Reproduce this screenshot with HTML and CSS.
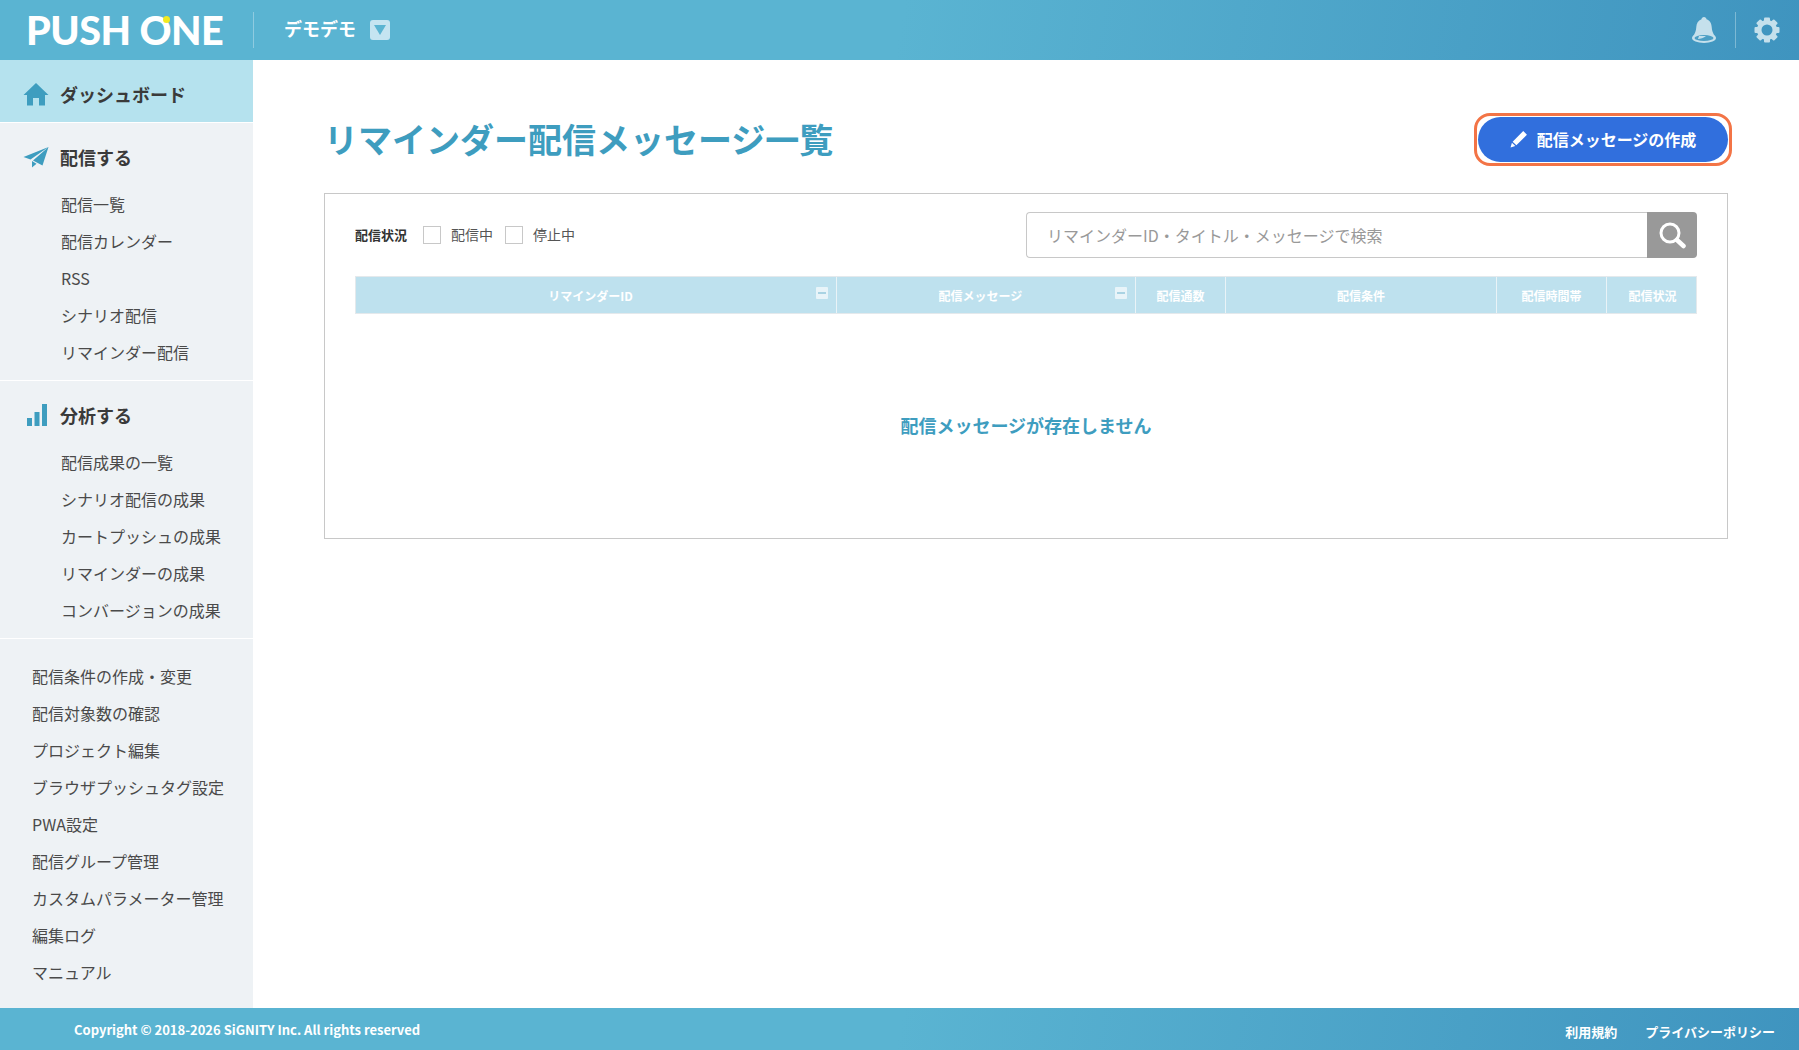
FILE: index.html
```html
<!DOCTYPE html>
<html lang="ja">
<head>
<meta charset="utf-8">
<title>リマインダー配信メッセージ一覧</title>
<link rel="stylesheet" href="styles.css">
</head>
<body>
<header class="topbar">
  <div class="brand"><span class="logo">PUSH O<span class="logo-dot"></span>NE</span></div>
  <div class="project">
    <span class="project-name">デモデモ</span>
    <span class="project-toggle"><svg width="12" height="10" viewBox="0 0 12 10"><path d="M0 0H12L6 10Z" fill="#5ab4d2"/></svg></span>
  </div>
  <div class="top-actions">
    <svg class="bell" width="24" height="26" viewBox="1 1 24 26"><path d="M13 1c1.500 0 2.300 1 2.500 2.200C19 4.300 20.500 7.300 20.700 11c.2 4 1.300 6.500 3.300 9.200H2C4 17.500 5.100 15 5.300 11 5.500 7.300 7 4.300 10.500 3.200 10.700 2 11.500 1 13 1Z" fill="#c5e0ec"/><ellipse cx="13" cy="22" rx="12" ry="5" fill="#c5e0ec"/><ellipse cx="13" cy="22" rx="9.500" ry="3" fill="#4c9fc5"/><path d="M7 23c2-.2 6-1 8-3H8Z" fill="#c5e0ec"/></svg>
    <span class="top-sep"></span>
    <svg class="gear" width="26" height="26" viewBox="0 0 26 26">
      <circle cx="13" cy="13" r="7.800" fill="none" stroke="#c5e0ec" stroke-width="4.600"/>
      <g fill="#c5e0ec">
        <rect x="10" y="0.500" width="6" height="5" rx="1"/>
        <rect x="10" y="0.500" width="6" height="5" rx="1" transform="rotate(45 13 13)"/>
        <rect x="10" y="0.500" width="6" height="5" rx="1" transform="rotate(90 13 13)"/>
        <rect x="10" y="0.500" width="6" height="5" rx="1" transform="rotate(135 13 13)"/>
        <rect x="10" y="0.500" width="6" height="5" rx="1" transform="rotate(180 13 13)"/>
        <rect x="10" y="0.500" width="6" height="5" rx="1" transform="rotate(225 13 13)"/>
        <rect x="10" y="0.500" width="6" height="5" rx="1" transform="rotate(270 13 13)"/>
        <rect x="10" y="0.500" width="6" height="5" rx="1" transform="rotate(315 13 13)"/>
      </g>
    </svg>
  </div>
</header>
<div class="body-row">
  <aside class="sidebar">
    <a class="nav-home">
      <svg class="nav-icon" width="26" height="24" viewBox="0 0 26 24"><path fill="#3e9dbf" d="M13 1 25.500 13h-3.500v10.500h-6V16h-6v7.500H4V13H.5Z"/></svg>
      <span>ダッシュボード</span>
    </a>
    <section class="nav-group">
      <div class="nav-head">
        <svg class="nav-icon" width="26" height="22" viewBox="0 0 26 22"><path fill="#3e9dbf" d="M25.500 1 .5 11l7 2.500Zm0 0L10 14.500 19.500 19.500ZM9 15v6.500l4.500-3.700Z"/></svg>
        <span>配信する</span>
      </div>
      <ul class="nav-list">
        <li>配信一覧</li><li>配信カレンダー</li><li>RSS</li><li>シナリオ配信</li><li>リマインダー配信</li>
      </ul>
    </section>
    <section class="nav-group">
      <div class="nav-head">
        <svg class="nav-icon" width="26" height="24" viewBox="0 0 26 24"><path fill="#3e9dbf" d="M4 15h5v8H4zM11.500 9h5v14h-5zM19 1h5v22h-5z"/></svg>
        <span>分析する</span>
      </div>
      <ul class="nav-list">
        <li>配信成果の一覧</li><li>シナリオ配信の成果</li><li>カートプッシュの成果</li><li>リマインダーの成果</li><li>コンバージョンの成果</li>
      </ul>
    </section>
    <ul class="nav-misc">
      <li>配信条件の作成・変更</li><li>配信対象数の確認</li><li>プロジェクト編集</li><li>ブラウザプッシュタグ設定</li><li>PWA設定</li><li>配信グループ管理</li><li>カスタムパラメーター管理</li><li>編集ログ</li><li>マニュアル</li>
    </ul>
  </aside>
  <main class="content">
    <div class="page-head">
      <h1 class="page-title">リマインダー配信メッセージ一覧</h1>
      <div class="create-outline">
        <a class="create-btn">
          <svg width="18" height="18" viewBox="0 0 17 17"><path fill="#fff" d="M12.500 1 16 4.500 6 14.500 2.500 11ZM1.800 12l3.200 3.200L.5 16.500Z"/></svg>
          配信メッセージの作成
        </a>
      </div>
    </div>
    <section class="panel">
      <div class="toolbar">
        <div class="filters">
          <span class="filter-title">配信状況</span>
          <label class="check"><span class="box"></span><span class="check-text">配信中</span></label>
          <label class="check"><span class="box"></span><span class="check-text">停止中</span></label>
        </div>
        <div class="search">
          <div class="search-input">リマインダーID・タイトル・メッセージで検索</div>
          <div class="search-btn"><svg width="28" height="28" viewBox="0 0 28 28"><circle cx="12" cy="12" r="9" fill="none" stroke="#fff" stroke-width="3"/><path d="M19 19l6.500 6" stroke="#fff" stroke-width="4.500" stroke-linecap="round"/></svg></div>
        </div>
      </div>
      <div class="thead">
        <div class="th th-collapsible"><span>リマインダーID</span><i class="collapse"></i></div>
        <div class="th th-collapsible"><span>配信メッセージ</span><i class="collapse"></i></div>
        <div class="th"><span>配信通数</span></div>
        <div class="th"><span>配信条件</span></div>
        <div class="th"><span>配信時間帯</span></div>
        <div class="th"><span>配信状況</span></div>
      </div>
      <p class="empty">配信メッセージが存在しません</p>
    </section>
  </main>
</div>
<footer class="footer">
  <span class="copyright">Copyright © 2018-2026 SiGNITY Inc. All rights reserved</span>
  <nav class="foot-links"><a>利用規約</a><a>プライバシーポリシー</a></nav>
</footer>
</body>
</html>
```
FILE: styles.css
```css
* { box-sizing: border-box; }
html, body { margin: 0; height: 100%; }
body {
  display: flex;
  flex-direction: column;
  height: 1050px;
  font-family: "Noto Sans CJK JP", "Noto Sans", sans-serif;
  color: #444;
  background: #fff;
  overflow: hidden;
}
ul { list-style: none; margin: 0; padding: 0; }

.topbar {
  flex: 0 0 60px;
  display: flex;
  align-items: center;
  background: linear-gradient(100deg, #5ab4d2 0%, #5ab4d2 50%, #3f94bf 100%);
}
.brand {
  width: 254px;
  height: 36px;
  border-right: 1px solid #8fcbe0;
  padding-left: 26px;
  display: flex;
  align-items: center;
}
.logo {
  position: relative;
  font-family: Lato, "Open Sans", sans-serif;
  font-weight: 900;
  font-size: 39.500px;
  line-height: 36px;
  color: #fff;
  letter-spacing: -0.5px;
  white-space: nowrap;
}
.logo-dot {
  position: absolute;
  left: 137px;
  top: 4px;
  width: 7px;
  height: 7px;
  border-radius: 50%;
  background: #f2ea20;
}
.project { display: flex; align-items: center; margin-left: 30px; gap: 14px; }
.project-name { color: #fff; font-size: 18px; font-weight: 700; padding-bottom: 4px; }
.project-toggle {
  width: 20px;
  height: 20px;
  border-radius: 3px;
  background: #c5e4f1;
  display: flex;
  align-items: center;
  justify-content: center;
}
.top-actions { margin-left: auto; display: flex; align-items: center; height: 36px; padding-right: 19px; }
.bell { margin-right: 19px; }
.top-sep { width: 1px; height: 36px; background: #7db9d4; margin-right: 18px; }

.body-row { flex: 1; display: flex; min-height: 0; }
.sidebar { width: 253px; background: #eef2f5; flex: none; }
.nav-home {
  display: flex;
  align-items: center;
  height: 62px;
  background: #b5e2ee;
  padding: 6px 0 0 23px;
  font-size: 18px;
  font-weight: 700;
  color: #3a3a3a;
  gap: 11px;
  margin-bottom: 1px;
  box-shadow: 0 1px 0 #fff;
}
.nav-group { border-bottom: 1px solid #fff; height: 258px; }
.nav-head {
  display: flex;
  align-items: center;
  gap: 11px;
  height: 62px;
  padding: 6px 0 0 23px;
  font-size: 18px;
  font-weight: 700;
  color: #3a3a3a;
}
.nav-list { padding: 1px 0 0 61px; }
.nav-list li, .nav-misc li { height: 37px; line-height: 37px; font-size: 16px; color: #4a4a4a; white-space: nowrap; }
.nav-misc { padding: 19px 0 0 32px; }

.content { flex: 1; padding: 53px 0 0 71px; min-width: 0; }
.page-head { display: flex; align-items: center; justify-content: space-between; width: 1404px; height: 52px; }
.page-title { margin: 0; font-size: 34px; font-weight: 700; color: #3e9dbf; line-height: 52px; white-space: nowrap; }
.create-outline {
  border: 3px solid #f37446;
  border-radius: 16px;
  padding: 1px;
  margin-right: -4px;
}
.create-btn {
  display: flex;
  align-items: center;
  justify-content: center;
  gap: 9px;
  width: 250px;
  height: 45px;
  border-radius: 23px;
  background: #316fdd;
  color: #fff;
  font-size: 16px;
  font-weight: 700;
}

.panel {
  margin-top: 28px;
  width: 1404px;
  height: 346px;
  border: 1px solid #c8c8c8;
  padding: 18px 30px 0;
}
.toolbar { display: flex; align-items: center; justify-content: space-between; height: 46px; }
.filters { display: flex; align-items: center; font-size: 14px; }
.filter-title { font-size: 13px; font-weight: 700; color: #333; margin-right: 16px; padding-bottom: 2px; }
.check { display: flex; align-items: center; gap: 10px; margin-right: 12px; color: #555; }
.check-text { padding-bottom: 2px; }
.box { width: 18px; height: 18px; border: 1px solid #c8c8c8; display: block; background: #fff; }
.search { display: flex; width: 671px; height: 46px; }
.search-input {
  flex: 1;
  border: 1px solid #c8c8c8;
  border-right: 0;
  border-radius: 4px 0 0 4px;
  padding-left: 20px;
  font-size: 16px;
  line-height: 44px;
  color: #999;
}
.search-btn {
  width: 50px;
  background: #999;
  border-radius: 0 4px 4px 0;
  display: flex;
  align-items: center;
  justify-content: center;
}
.thead {
  margin-top: 18px;
  display: grid;
  grid-template-columns: 481px 299px 90px 271px 110px 91px;
  height: 38px;
  background: #bee1ee;
  border: 1px solid #e4e9ec;
}
.th {
  position: relative;
  display: flex;
  align-items: center;
  justify-content: center;
  color: #fff;
  font-size: 12px;
  font-weight: 700;
  border-right: 1px solid #e9f3f7;
}
.th:last-child { border-right: 0; }
.th-collapsible { padding-right: 11px; }
.collapse {
  position: absolute;
  right: 8px;
  top: 10px;
  width: 12px;
  height: 12px;
  border-radius: 1px;
  background: #e8f4f9;
}
.collapse::after {
  content: "";
  position: absolute;
  left: 2px;
  right: 2px;
  top: 5px;
  height: 2px;
  background: #a9d3e3;
}
.empty {
  margin: 0;
  padding-top: 98px;
  text-align: center;
  font-size: 18px;
  font-weight: 700;
  line-height: 26px;
  color: #3e9dbf;
}

.footer {
  flex: 0 0 42px;
  display: flex;
  align-items: center;
  justify-content: space-between;
  padding: 0 24px 0 74px;
  background: linear-gradient(100deg, #5ab4d2 0%, #5ab4d2 50%, #3f94bf 100%);
  color: #fff;
  font-size: 13px;
  font-weight: 700;
}
.foot-links { display: flex; gap: 28px; padding-top: 4px; }
```
